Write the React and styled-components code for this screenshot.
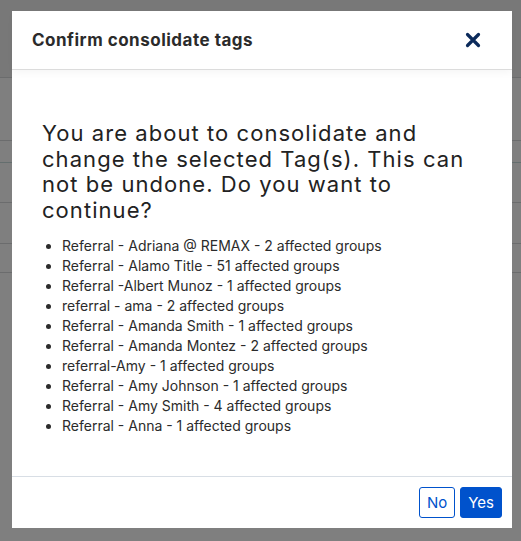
import React from 'react'
import styled, { createGlobalStyle } from 'styled-components'

const GlobalStyle = createGlobalStyle`
  html, body {
    margin: 0;
    padding: 0;
    background: #ffffff;
  }
  body {
    font-family: Inter, "Noto Sans", "Liberation Sans", sans-serif;
  }
`

const tags = [
  'Referral - Adriana @ REMAX - 2 affected groups',
  'Referral - Alamo Title - 51 affected groups',
  'Referral -Albert Munoz - 1 affected groups',
  'referral - ama - 2 affected groups',
  'Referral - Amanda Smith - 1 affected groups',
  'Referral - Amanda Montez - 2 affected groups',
  'referral-Amy - 1 affected groups',
  'Referral - Amy Johnson - 1 affected groups',
  'Referral - Amy Smith - 4 affected groups',
  'Referral - Anna - 1 affected groups',
]

// row heights of the page table sitting behind the backdrop
const rows = [63, 22, 40, 41, 29]

const App = () => {
  return (
    <>
      <GlobalStyle />
      <Page>
        <PageHeader />
        {rows.map((h, index) => (
          <TableRow key={index} $height={h} $accent={index === 1} />
        ))}
      </Page>
      <Backdrop>
        <Modal role='dialog'>
          <Header>
            <Title>Confirm consolidate tags</Title>
            <CloseButton aria-label='Close'>
              <svg width='16' height='16' viewBox='0 0 16 16'>
                <path
                  d='M2.5 2.5 L13.5 13.5 M13.5 2.5 L2.5 13.5'
                  stroke='#0b2a5b'
                  strokeWidth='3.2'
                  strokeLinecap='round'
                />
              </svg>
            </CloseButton>
          </Header>
          <Body>
            <Message>
              You are about to consolidate and change the selected Tag(s). This
              can not be undone. Do you want to continue?
            </Message>
            <TagList>
              {tags.map((tag, index) => (
                <li key={index}>{tag}</li>
              ))}
            </TagList>
          </Body>
          <Footer>
            <Button>No</Button>
            <Button $primary>Yes</Button>
          </Footer>
        </Modal>
      </Backdrop>
    </>
  )
}

export default App

const Page = styled.div`
  width: 521px;
  height: 541px;
  display: flex;
  flex-direction: column;
  background: #ffffff;
`

const PageHeader = styled.div`
  height: 77px;
  flex-shrink: 0;
  background: #f0f0f0;
  border-bottom: 1px solid #d6d8da;
`

const TableRow = styled.div`
  height: ${(p) => p.$height - 1}px;
  flex-shrink: 0;
  border-bottom: 1px solid ${(p) => (p.$accent ? '#c8dcdc' : '#d6d8da')};
`

const Backdrop = styled.div`
  position: fixed;
  inset: 0;
  background: rgba(0, 0, 0, 0.5);
  display: flex;
  align-items: flex-start;
  justify-content: flex-start;
  padding: 11px 0 0 12px;
`

const Modal = styled.div`
  width: 500px;
  height: 517px;
  background: #ffffff;
  display: flex;
  flex-direction: column;
`

const Header = styled.div`
  height: 59px;
  flex-shrink: 0;
  display: flex;
  align-items: center;
  justify-content: space-between;
  padding: 0 29px 0 20px;
  border-bottom: 1px solid #dcdcdc;
  box-shadow: 0 3px 8px rgba(0, 0, 0, 0.04);
  position: relative;
  box-sizing: border-box;
`

const Title = styled.h2`
  margin: 0;
  font-size: 17px;
  font-weight: 700;
  letter-spacing: 0.5px;
  color: #2b2b2b;
`

const CloseButton = styled.button`
  border: none;
  background: none;
  padding: 0;
  width: 20px;
  height: 20px;
  display: flex;
  align-items: center;
  justify-content: center;
  cursor: pointer;
`

const Body = styled.div`
  flex: 1;
  padding: 51px 30px 0 30px;
`

const Message = styled.p`
  margin: 0 0 12px 0;
  font-size: 22px;
  line-height: 25.7px;
  font-weight: 400;
  letter-spacing: 1.05px;
  color: #222222;
`

const TagList = styled.ul`
  margin: 0;
  padding-left: 20px;
  font-size: 14px;
  line-height: 20px;
  color: #2b2b2b;
`

const Footer = styled.div`
  height: 52px;
  flex-shrink: 0;
  border-top: 1px solid #d8dee5;
  display: flex;
  justify-content: flex-end;
  align-items: flex-start;
  gap: 5px;
  padding: 10px 10px 0 0;
  box-sizing: border-box;
`

const Button = styled.button`
  height: 31px;
  padding: 0 7px;
  border-radius: 3px;
  font-family: Inter, "Noto Sans", "Liberation Sans", sans-serif;
  font-size: 15px;
  cursor: pointer;
  border: 1px solid #0052cc;
  background: ${(p) => (p.$primary ? '#0052cc' : '#ffffff')};
  color: ${(p) => (p.$primary ? '#ffffff' : '#0052cc')};
`
